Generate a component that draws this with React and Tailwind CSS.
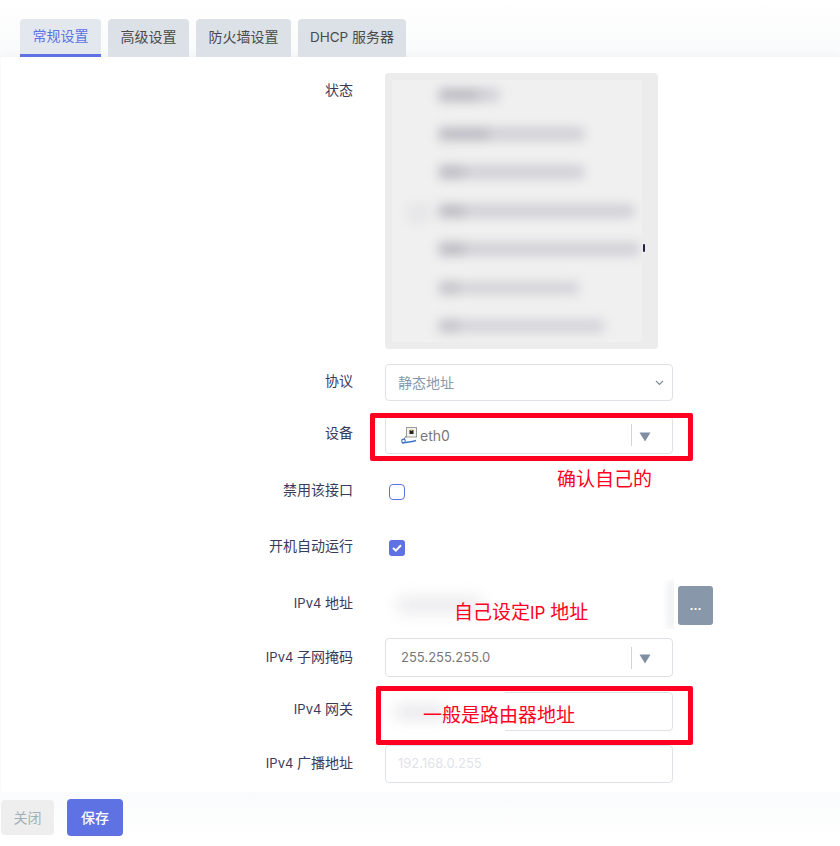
const FONT = "font-['Inter','Noto_Sans_CJK_SC','Noto_Sans',sans-serif]"

const TABS = [
  { name: '常规设置', w: 'w-[81px]', active: true },
  { name: '高级设置', w: 'w-[81px]' },
  { name: '防火墙设置', w: 'w-[95px]' },
  { name: <><span className="text-[13.5px]">DHCP </span>服务器</>, w: 'w-[108px]' },
]

// 状态框里被打码的几行
const BLUR_LINES = [
  { head: 40, total: 60, op: 'opacity-70' },
  { head: 50, total: 145, op: 'opacity-70' },
  { head: 25, total: 145, op: 'opacity-70' },
  { head: 25, total: 195, op: 'opacity-70' },
  { head: 25, total: 200, op: 'opacity-70' },
  { head: 20, total: 140, op: 'opacity-60' },
  { head: 20, total: 165, op: 'opacity-60' },
]

function Row({ label, className = '', labelClass = 'pt-[8px]', children }) {
  return (
    <div className={`flex ${className}`}>
      <div className={`w-[352px] shrink-0 text-right text-[14px] leading-[18px] text-[#3a3a5c] ${labelClass}`}>
        {label}
      </div>
      <div className="ml-[32px]">{children}</div>
    </div>
  )
}

function Ipv4({ children }) {
  return (
    <>
      <span className="text-[13px]">IPv4 </span>
      {children}
    </>
  )
}

function ComboArrow() {
  return (
    <div className="flex h-[23px] items-center">
      <div className="h-[22px] w-px bg-[#cfd4da]" />
      <svg width="12" height="10" viewBox="0 0 12 10" className="ml-[7px] mr-[21px] mt-[3px]">
        <path d="M0.5 0.5h11L6 9.5z" fill="#7f8ea3" />
      </svg>
    </div>
  )
}

function EthIcon() {
  return (
    <svg width="16" height="17" viewBox="0 0 16 17" className="shrink-0">
      <rect x="5.5" y="0.5" width="10" height="9.5" fill="#f2f2ee" stroke="#9a9a96" />
      <rect x="8.5" y="3" width="4" height="4" fill="#222" />
      <rect x="9.5" y="2.5" width="2" height="1.5" fill="#c9b24a" />
      <path d="M5 9 L2.5 13" stroke="#777" strokeWidth="1" fill="none" />
      <circle cx="2.5" cy="14" r="1.8" fill="none" stroke="#3f76c4" strokeWidth="1.2" />
      <path d="M1 16 C5 15.5 10 15 15 13.5" stroke="#3f76c4" strokeWidth="1.4" fill="none" />
    </svg>
  )
}

function App() {
  return (
    <div className={`relative h-[846px] w-[840px] overflow-hidden bg-white ${FONT}`}>
      <div className="h-[57px] bg-gradient-to-b from-white to-[#f9fafb] pl-[20px] pt-[19px]">
        <div className="flex gap-[7px]">
          {TABS.map((t, i) => (
            <div
              key={i}
              className={`flex h-[38px] items-center justify-center rounded-t-[4px] pb-[3px] text-[14px] ${t.w} ${
                t.active
                  ? 'border-b-[3px] border-[#5e72e4] bg-[#e3e8ee] pb-0 text-[#5e72e4]'
                  : 'bg-[#dce1e7] text-[#4a4a4a]'
              }`}
            >
              <span>{t.name}</span>
            </div>
          ))}
        </div>
      </div>

      <div className="ml-px h-[735px] rounded-[3px] bg-white pt-[16px] shadow-[0_0_10px_rgba(60,70,90,0.06)]">
        <Row label="状态" className="h-[276px]">
          <div className="relative h-[276px] w-[273px] overflow-hidden rounded-[4px] bg-[#ececec] p-[7px]">
            <div className="flex h-[262px] w-[250px] flex-col gap-[26.5px] overflow-hidden bg-[#f0f0f0] pl-[47px] pt-[9px]">
              {BLUR_LINES.map((l, i) => (
                <div key={i} className={`flex h-[12px] shrink-0 blur-[6px] ${l.op}`} style={{ width: l.total }}>
                  <div className="h-full bg-[#9c9ca8]" style={{ width: l.head }} />
                  <div className="h-full flex-1 bg-[#bcbcc6]" />
                </div>
              ))}
            </div>
            {/* 打码没盖住的一小截 */}
            <div className="absolute left-[258px] top-[171px] h-[8px] w-[2px] rounded-full bg-[#222244]" />
            <div className="absolute left-[22px] top-[130px] h-[20px] w-[24px] bg-[#d8d8de] opacity-40 blur-[6px]" />
          </div>
        </Row>

        <Row label="协议" className="mt-[15px]">
          <div className="flex h-[37px] w-[288px] items-center justify-between rounded-[4px] border border-[#dee2e6] pl-[12px] pr-[8px] text-[14px] text-[#8898aa]">
            静态地址
            <svg width="9" height="6" viewBox="0 0 9 6">
              <path d="M1 1l3.5 3.5L8 1" stroke="#7f8ea3" strokeWidth="1.2" fill="none" />
            </svg>
          </div>
        </Row>

        <Row label="设备" className="mt-[15px]" labelClass="pt-[8px]">
          <div className="flex h-[38px] w-[288px] items-center justify-between rounded-[4px] border border-[#dee2e6] pl-[15px] text-[14px] text-[#777]">
            <div className="flex items-center gap-[3px]">
              <EthIcon />
              eth0
            </div>
            <ComboArrow />
          </div>
        </Row>

        <Row label="禁用该接口" className="mt-[27px] h-[32px]" labelClass="pt-0">
          <div className="ml-[4px] mt-[3px] h-[16px] w-[16px] rounded-[4px] border border-[#5e72e4] bg-white" />
        </Row>

        <Row label="开机自动运行" className="mt-[24px] h-[24px]" labelClass="pt-0">
          <div className="ml-[4px] mt-[3px] flex h-[16px] w-[16px] items-center justify-center rounded-[3px] bg-[#5e72e4]">
            <svg width="10" height="8" viewBox="0 0 10 8">
              <path d="M1 4l2.8 2.6L9 1.2" stroke="#fff" strokeWidth="2" fill="none" />
            </svg>
          </div>
        </Row>

        <Row label={<Ipv4>地址</Ipv4>} className="mt-[19px]" labelClass="pt-[14px]">
          <div className="flex items-center">
            <div className="h-[49px] w-[289px] overflow-hidden bg-white">
              <div className="flex h-full items-center justify-between">
                <div className="ml-[12px] h-[16px] w-[85px] bg-[#d6d6dc] opacity-50 blur-[8px]" />
                <div className="h-full w-[4px] bg-[#d9dce2] blur-[4px]" />
              </div>
            </div>
            <div className="ml-[4px] mt-[2px] flex h-[39px] w-[35px] items-center justify-center rounded-[3px] bg-[#8898aa] text-[12px] font-bold leading-none text-white">
              ...
            </div>
          </div>
        </Row>

        <Row label={<Ipv4>子网掩码</Ipv4>} className="mt-[9px]" labelClass="pt-[10px]">
          <div className="flex h-[39px] w-[288px] items-center justify-between rounded-[4px] border border-[#dee2e6] pl-[15px] text-[13px] text-[#777]">
            255.255.255.0
            <ComboArrow />
          </div>
        </Row>

        <Row label={<Ipv4>网关</Ipv4>} className="mt-[15px]" labelClass="pt-[8px]">
          <div className="relative h-[39px] w-[288px] rounded-[4px] border border-[#dee2e6]">
            <div className="absolute inset-y-[-1px] left-[-1px] w-[120px] bg-white">
              <div className="ml-[10px] mt-[12px] h-[16px] w-[50px] bg-[#d6d6dc] opacity-50 blur-[7px]" />
            </div>
          </div>
        </Row>

        <Row label={<Ipv4>广播地址</Ipv4>} className="mt-[14px]" labelClass="pt-[9px]">
          <div className="flex h-[38px] w-[288px] items-center rounded-[4px] border border-[#dee2e6] pl-[12px] text-[13px] text-[#dfe3e8]">
            192.168.0.255
          </div>
        </Row>
      </div>

      <div className="flex items-center bg-gradient-to-b from-[#fafbfc] to-white pl-px pt-[7px]">
        <div className="flex h-[35px] w-[53px] items-center justify-center rounded-[4px] bg-[#eeeeee] text-[14px] text-[#a3aebb]">
          关闭
        </div>
        <div className="ml-[13px] flex h-[37px] w-[56px] items-center justify-center rounded-[4px] bg-[#5e72e4] text-[14px] font-medium text-white">
          保存
        </div>
      </div>

      {/* 截图上后加的红色标注 */}
      <div className="absolute left-[370px] top-[413px] h-[48px] w-[323px] rounded-[2px] border-[5px] border-[#ff0022]" />
      <div className="absolute left-[376px] top-[686px] h-[59px] w-[317px] rounded-[2px] border-[5px] border-[#ff0022]" />
      <div className="absolute left-[557px] top-[468px] text-[19px] leading-[24px] text-[#ff0022]">确认自己的</div>
      <div className="absolute left-[454px] top-[601px] text-[19px] leading-[24px] text-[#ff0022]">
        自己设定<span className="text-[17px]">IP </span>地址
      </div>
      <div className="absolute left-[423px] top-[704px] text-[19px] leading-[24px] text-[#ff0022]">一般是路由器地址</div>
    </div>
  )
}

export default App
